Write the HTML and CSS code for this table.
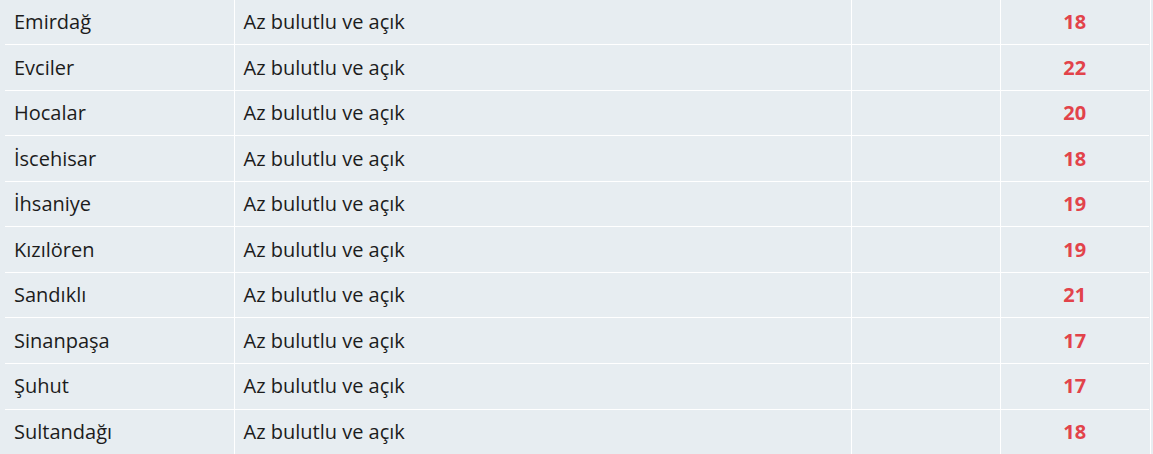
FILE: index.html
```html
<!DOCTYPE html>
<html lang="tr">
<head>
<meta charset="utf-8">
<title>Hava durumu</title>
<link rel="stylesheet" href="styles.css">
</head>
<body>
<div class="wrap">
<table class="weather">
<colgroup>
<col class="c-name">
<col class="c-desc">
<col class="c-empty">
<col class="c-temp">
</colgroup>
<tbody>
<tr><td class="name">Emirdağ</td><td class="desc">Az bulutlu ve açık</td><td class="empty"></td><td class="temp">18</td></tr>
<tr><td class="name">Evciler</td><td class="desc">Az bulutlu ve açık</td><td class="empty"></td><td class="temp">22</td></tr>
<tr><td class="name">Hocalar</td><td class="desc">Az bulutlu ve açık</td><td class="empty"></td><td class="temp">20</td></tr>
<tr><td class="name">İscehisar</td><td class="desc">Az bulutlu ve açık</td><td class="empty"></td><td class="temp">18</td></tr>
<tr><td class="name">İhsaniye</td><td class="desc">Az bulutlu ve açık</td><td class="empty"></td><td class="temp">19</td></tr>
<tr><td class="name">Kızılören</td><td class="desc">Az bulutlu ve açık</td><td class="empty"></td><td class="temp">19</td></tr>
<tr><td class="name">Sandıklı</td><td class="desc">Az bulutlu ve açık</td><td class="empty"></td><td class="temp">21</td></tr>
<tr><td class="name">Sinanpaşa</td><td class="desc">Az bulutlu ve açık</td><td class="empty"></td><td class="temp">17</td></tr>
<tr><td class="name">Şuhut</td><td class="desc">Az bulutlu ve açık</td><td class="empty"></td><td class="temp">17</td></tr>
<tr><td class="name">Sultandağı</td><td class="desc">Az bulutlu ve açık</td><td class="empty"></td><td class="temp">18</td></tr>
</tbody>
</table>
</div>
</body>
</html>
```

FILE: styles.css
```css
html, body {
  margin: 0;
  padding: 0;
  background: #e7edf1;
  overflow: hidden;
}

.wrap {
  margin-left: 5px;
  margin-top: -1.57px;
  width: 1144px;
  padding-right: 1px;
  border-right: 1px solid #ffffff;
}

.weather {
  width: 1144px;
  border-collapse: collapse;
  table-layout: fixed;
  font-family: "Open Sans", "Noto Sans", sans-serif;
  font-size: 20px;
  line-height: 1.42857143;
  color: #1c1c1c;
}

.c-name { width: 229px; }
.c-desc { width: 617px; }
.c-empty { width: 149px; }
.c-temp { width: 149px; }

.weather td {
  padding: 8.5px 7px 7.5px 9px;
  border-top: 1px solid #ffffff;
  vertical-align: top;
  white-space: nowrap;
}

.weather td.desc,
.weather td.empty,
.weather td.temp {
  border-left: 1px solid #ffffff;
}

.weather td.temp {
  padding-left: 8px;
  padding-right: 8px;
  text-align: center;
  font-weight: 700;
  color: #e2434a;
}
```
